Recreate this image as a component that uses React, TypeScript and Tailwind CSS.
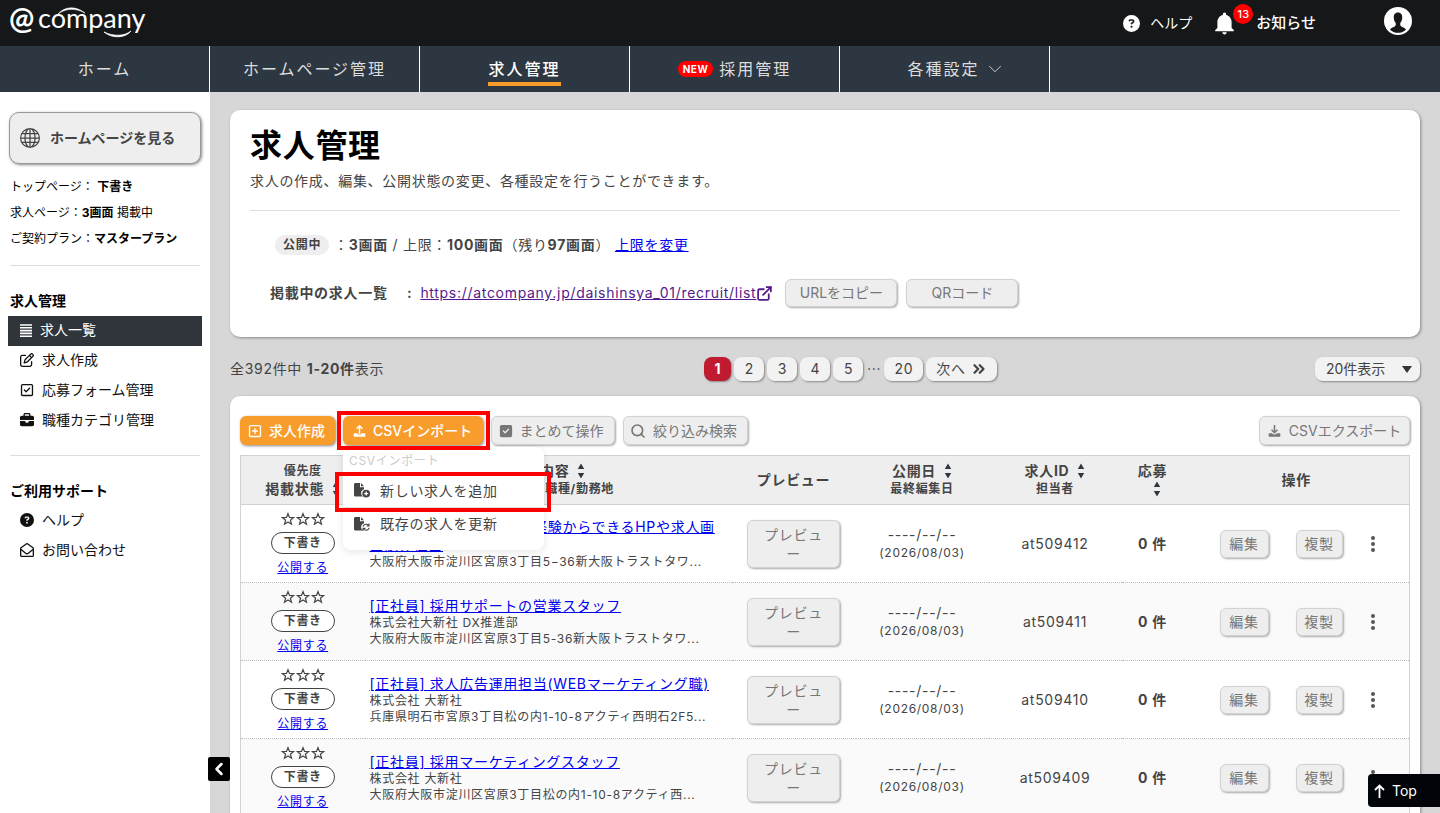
import type { ReactNode } from "react";
import clsx from "clsx";
import { ChevronDown, ChevronLeft, ChevronsRight, ExternalLink, Search } from "lucide-react";
import { BsGlobe } from "react-icons/bs";
import {
  FaBriefcase,
  FaCircleQuestion,
  FaRegEnvelopeOpen,
  FaRegPenToSquare,
  FaRegSquareCheck,
  FaRegSquarePlus,
  FaSquareCheck,
} from "react-icons/fa6";
import { IoMdNotifications } from "react-icons/io";

interface Job {
  id: string;
  title: string;
  company?: string;
  address: string;
}

const jobs: Job[] = [
  {
    id: "at509412",
    title: "[正社員] ウェブ制作 / 未経験からできるHPや求人画面制作担当",
    address: "大阪府大阪市淀川区宮原3丁目5−36新大阪トラストタワ...",
  },
  {
    id: "at509411",
    title: "[正社員] 採用サポートの営業スタッフ",
    company: "株式会社大新社 DX推進部",
    address: "大阪府大阪市淀川区宮原3丁目5-36新大阪トラストタワ...",
  },
  {
    id: "at509410",
    title: "[正社員] 求人広告運用担当(WEBマーケティング職)",
    company: "株式会社 大新社",
    address: "兵庫県明石市宮原3丁目松の内1-10-8アクティ西明石2F5...",
  },
  {
    id: "at509409",
    title: "[正社員] 採用マーケティングスタッフ",
    company: "株式会社 大新社",
    address: "大阪府大阪市淀川区宮原3丁目松の内1-10-8アクティ西...",
  },
];

function Logo() {
  return (
    <svg width="150" height="46" viewBox="0 0 150 46" fill="none" role="img" aria-label="@company">
      <text x="1" y="29" fontFamily="Lato, sans-serif" fontSize="30" fontWeight="700" letterSpacing="0" fill="#fff">
        @
      </text>
      <text x="30" y="28" fontFamily="Lato, sans-serif" fontSize="27" letterSpacing="0" fill="#fff">
        company
      </text>
      <path d="M50 14C57 6 68 6 77 13C68 8 58 8 50 14Z" fill="#fff" stroke="#fff" strokeWidth="0.6" />
      <path d="M96 32C104 39 118 38 123 31C117 36 106 37 96 32Z" fill="#fff" stroke="#fff" strokeWidth="0.8" />
    </svg>
  );
}

function UserIcon() {
  return (
    <svg width="28" height="28" viewBox="0 0 28 28">
      <circle cx="14" cy="14" r="14" fill="#fff" />
      <path
        d="M14 5.6C10.9 5.6 9.6 7.9 9.8 11C10 13.6 10.8 14.8 11.6 15.8C12 17 11.8 18.6 11 19.3C9.6 20.3 7.4 20.8 6 22.4C8 24.6 10.8 25.8 14 25.8S20 24.6 22 22.4C20.6 20.8 18.4 20.3 17 19.3C16.2 18.6 16 17 16.4 15.8C17.2 14.8 18 13.6 18.2 11C18.4 7.9 17.1 5.6 14 5.6Z"
        fill="#151719"
      />
    </svg>
  );
}

function ListIcon() {
  return (
    <svg width="12" height="13" viewBox="0 0 12 13" stroke="currentColor" strokeWidth="1.6">
      <path d="M0 1H12M0 3.8H12M0 6.6H12M0 9.4H12M0 12.2H12" />
    </svg>
  );
}

function TrayIcon({ down = false }: { down?: boolean }) {
  return (
    <svg width="13" height="14" viewBox="0 0 14 14" fill="none" stroke="currentColor" strokeWidth="1.6">
      <path d={down ? "M7 0.5V8.6M3.8 5.6L7 8.8L10.2 5.6" : "M7 10V1.6M3.8 4.6L7 1.4L10.2 4.6"} />
      <path
        d="M2 9.4H4.6C5 11.2 9 11.2 9.4 9.4H12C12.9 9.4 13.3 10 13.3 10.6V12C13.3 12.8 12.8 13.3 12 13.3H2C1.2 13.3 0.7 12.8 0.7 12V10.6C0.7 10 1.1 9.4 2 9.4Z"
        fill="currentColor"
        stroke="none"
      />
    </svg>
  );
}

function FileIcon({ refresh = false }: { refresh?: boolean }) {
  return (
    <svg width="17" height="15" viewBox="0 0 17 15" fill="none">
      <path
        d="M1.5 0H6V4.2H10V6.3C7.7 7 6.6 9 7.3 11.2C7.6 12.2 8.2 13 9 13.6H1.5C0.6 13.6 0 13 0 12.1V1.5C0 0.6 0.6 0 1.5 0ZM7 0L10 3.2H7Z"
        fill="#444"
      />
      {refresh ? (
        <path
          d="M8.9 9.6A3.3 3.3 0 0 1 14.6 8.4M15 6.6V9H12.6M15.2 10.8A3.3 3.3 0 0 1 9.5 12M9.1 13.8V11.4H11.5"
          stroke="#444"
          strokeWidth="1.1"
        />
      ) : (
        <>
          <circle cx="12.2" cy="10.6" r="3.9" fill="#444" />
          <path d="M12.2 8.6V12.6M10.2 10.6H14.2" stroke="#fff" strokeWidth="1.3" />
        </>
      )}
    </svg>
  );
}

function Sorter() {
  return (
    <svg className="shrink-0" width="8" height="16" viewBox="0 0 8 16" fill="#2d3741">
      <path d="M4 0.5L7.2 6H0.8ZM4 15.5L0.8 10H7.2Z" />
    </svg>
  );
}

function Stars() {
  return (
    <svg width="44" height="14" viewBox="0 0 44 14" fill="none" stroke="#444" strokeWidth="1.2">
      {[7, 22, 37].map((x) => (
        <path
          key={x}
          d={`M${x} 1.6L${x + 1.5} 5.4L${x + 5.6} 5.6L${x + 2.4} 8.2L${x + 3.5} 12.2L${x} 9.9L${x - 3.5} 12.2L${x - 2.4} 8.2L${x - 5.6} 5.6L${x - 1.5} 5.4Z`}
        />
      ))}
    </svg>
  );
}

function GrayButton({ className, children }: { className?: string; children: ReactNode }) {
  return (
    <button
      type="button"
      className={clsx(
        "flex items-center justify-center rounded-md border border-[#d2d2d2] bg-[#eee] text-[#777] shadow-[1px_1px_2px_#aaa]",
        className,
      )}
    >
      {children}
    </button>
  );
}

function NavItem({ children }: { children: ReactNode }) {
  return (
    <a href="#" className="flex w-[210px] items-center justify-center border-r border-white">
      {children}
    </a>
  );
}

function SideItem({ icon, label, active = false }: { icon: ReactNode; label: string; active?: boolean }) {
  return (
    <li>
      <a
        href="#"
        className={clsx(
          "mx-2 flex h-[30px] items-center gap-2 pb-[2px] pl-3",
          active ? "bg-[#2f353a] text-white" : "text-[#111]",
        )}
      >
        {icon}
        {label}
      </a>
    </li>
  );
}

function Sidebar() {
  return (
    <aside className="w-[210px] shrink-0 bg-white pt-5 tracking-normal text-black">
      <a
        href="#"
        className="mx-[9px] flex h-[52px] items-center gap-[10px] rounded-[10px] border border-[#999] bg-[#eee] pl-[10px] font-bold text-[#444] shadow-[1px_1px_3px_#888]"
      >
        <BsGlobe size={20} />
        ホームページを見る
      </a>
      <div className="mt-[10px] px-[10px] text-xs leading-[26px]">
        <p>
          トップページ： <b>下書き</b>
        </p>
        <p>
          求人ページ：<b>3画面</b> 掲載中
        </p>
        <p>
          ご契約プラン：<b>マスタープラン</b>
        </p>
      </div>
      <hr className="mx-[10px] mt-[13px] border-[#ddd]" />
      <h2 className="mt-5 px-[10px] leading-[30px] font-bold">求人管理</h2>
      <ul>
        <SideItem active icon={<ListIcon />} label="求人一覧" />
        <SideItem icon={<FaRegPenToSquare size={14} />} label="求人作成" />
        <SideItem icon={<FaRegSquareCheck size={14} />} label="応募フォーム管理" />
        <SideItem icon={<FaBriefcase size={14} />} label="職種カテゴリ管理" />
      </ul>
      <hr className="mx-[10px] mt-[19px] border-[#ddd]" />
      <h2 className="mt-5 px-[10px] leading-[30px] font-bold">ご利用サポート</h2>
      <ul>
        <SideItem icon={<FaCircleQuestion size={14} />} label="ヘルプ" />
        <SideItem icon={<FaRegEnvelopeOpen size={14} />} label="お問い合わせ" />
      </ul>
    </aside>
  );
}

function Summary() {
  return (
    <section className="rounded-[10px] bg-white px-5 pt-4 pb-[30px] shadow-[1px_1px_3px_#888]">
      <h1 className="text-[32px] leading-10 font-bold text-black">求人管理</h1>
      <p className="mt-1 leading-[22px]">求人の作成、編集、公開状態の変更、各種設定を行うことができます。</p>
      <hr className="mt-[18px] border-[#ddd]" />
      <div className="mt-[22px] flex h-6 items-center pl-[25px]">
        <span className="rounded-full bg-[#eee] px-2 text-xs leading-5 font-bold">公開中</span>
        <p className="pl-[5px]">
          ：<b>3画面</b> / 上限：<b>100画面</b>（残り<b>97画面</b>）
        </p>
        <a href="#" className="pl-[5px] text-[#00e] underline">
          上限を変更
        </a>
      </div>
      <div className="mt-[22px] flex h-7 items-center pl-5">
        <b className="w-[137px]">掲載中の求人一覧</b>
        <b>:</b>
        <a href="#" className="ml-2 flex items-center text-[#551a8b]">
          <span className="underline">https://atcompany.jp/daishinsya_01/recruit/list</span>
          <ExternalLink size={17} strokeWidth={2.5} />
        </a>
        <GrayButton className="ml-3 h-7 w-[112px] tracking-normal">URLをコピー</GrayButton>
        <GrayButton className="ml-[9px] h-7 w-[112px] tracking-normal">QRコード</GrayButton>
      </div>
    </section>
  );
}

function Pager() {
  const button = "h-6 rounded-lg px-[10px] shadow-[1px_1px_2px_#888]";
  return (
    <div className="mt-5 flex items-center justify-between">
      <p>
        全392件中 <b>1-20件</b>表示
      </p>
      <nav className="flex items-center gap-[3px] pl-[2px]" aria-label="ページ">
        <button type="button" className={clsx(button, "w-[27px] bg-[#bf1a2f] font-bold text-white")}>
          1
        </button>
        {["2", "3", "4", "5"].map((n) => (
          <button key={n} type="button" className={clsx(button, "w-[30px] bg-[#f2f2f2]")}>
            {n}
          </button>
        ))}
        <span className="w-[15px] text-center">⋯</span>
        <button type="button" className={clsx(button, "bg-[#f2f2f2]")}>
          20
        </button>
        <button type="button" className={clsx(button, "flex items-center gap-1 bg-[#f2f2f2] pr-[9px]")}>
          次へ <ChevronsRight size={18} strokeWidth={3} />
        </button>
      </nav>
      <div className="relative">
        <select
          aria-label="表示件数"
          className="h-6 w-[105px] appearance-none rounded-lg bg-[#f2f2f2] pl-[11px] tracking-normal shadow-[1px_1px_2px_#888]"
        >
          <option>20件表示</option>
        </select>
        <svg className="pointer-events-none absolute top-[9px] right-2" width="10" height="7" viewBox="0 0 10 7">
          <path d="M0 0H10L5 7Z" fill="#333" />
        </svg>
      </div>
    </div>
  );
}

function ImportMenu() {
  return (
    <div className="relative">
      <button
        type="button"
        className="flex h-[29px] w-[140px] items-center gap-[7px] rounded-md bg-[#f89c2c] pl-[10px] font-medium text-white shadow-[1px_1px_3px_#888]"
      >
        <TrayIcon />
        CSVインポート
      </button>
      <div className="absolute top-[31px] left-0 z-10 w-[201px] rounded-lg bg-white pb-[10px] tracking-wider shadow-[0_2px_8px_#0000001a]">
        <p className="pl-[6px] text-xs leading-[27px] text-[#ccc]">CSVインポート</p>
        <button type="button" className="flex h-[34px] w-full items-center gap-[9px] border-b border-[#ddd] pl-[11px]">
          <FileIcon />
          新しい求人を追加
        </button>
        <button type="button" className="flex h-8 w-full items-center gap-[9px] pl-[11px]">
          <FileIcon refresh />
          既存の求人を更新
        </button>
      </div>
      <div className="pointer-events-none absolute -top-[5px] -left-[6px] z-20 h-[39px] w-[153px] border-4 border-[#f00]" />
      <div className="pointer-events-none absolute top-14 -left-2 z-20 h-10 w-[216px] border-4 border-[#f00]" />
    </div>
  );
}

function JobTable() {
  return (
    <table className="mt-[10px] w-full table-fixed border border-[#d2d2d2]">
      <colgroup>
        <col className="w-[124px]" />
        <col />
        <col className="w-[124px]" />
        <col className="w-[133px]" />
        <col className="w-[133px]" />
        <col className="w-[62px]" />
        <col className="w-[226px]" />
      </colgroup>
      <thead>
        <tr className="h-[49px] border-b border-[#d2d2d2] bg-[#eee] leading-[18px]">
          <th>
            <div className="text-xs leading-[18px]">優先度</div>
            <div className="flex items-center justify-center gap-2">
              掲載状態 <Sorter />
            </div>
          </th>
          <th>
            <div className="flex items-center justify-center gap-2">
              求人内容 <Sorter />
            </div>
            <div className="text-xs leading-[18px]">会社名称 / 職種/勤務地</div>
          </th>
          <th>プレビュー</th>
          <th>
            <div className="flex items-center justify-center gap-2">
              公開日 <Sorter />
            </div>
            <div className="text-xs leading-[18px]">最終編集日</div>
          </th>
          <th>
            <div className="flex items-center justify-center gap-2">
              求人ID <Sorter />
            </div>
            <div className="text-xs leading-[18px]">担当者</div>
          </th>
          <th>
            <div>応募</div>
            <div className="flex h-[18px] items-center justify-center pl-2">
              <Sorter />
            </div>
          </th>
          <th>操作</th>
        </tr>
      </thead>
      <tbody>
        {jobs.map((job) => (
          <tr key={job.id} className="h-[78px] border-b border-dotted border-[#bbb] text-center even:bg-[#fafafa]">
            <td>
              <div className="flex flex-col items-center pt-[3px]">
                <Stars />
                <span className="mt-[6px] w-16 rounded-full border border-[#444] bg-white text-xs leading-5 font-bold">
                  下書き
                </span>
                <a href="#" className="mt-1 text-xs leading-5 text-[#00e] underline">
                  公開する
                </a>
              </div>
            </td>
            <td className="pr-[6px] pl-[5px] text-left text-xs leading-4">
              <a href="#" className="block pr-2 text-sm leading-[18px] break-all text-[#00e] underline">
                {job.title}
              </a>
              {job.company && <p>{job.company}</p>}
              <p className="truncate">{job.address}</p>
            </td>
            <td>
              <GrayButton className="mx-auto h-12 w-[93px] px-4 leading-[19px] break-all">プレビュー</GrayButton>
            </td>
            <td className="leading-[18px]">
              ----/--/--
              <div className="text-xs leading-[18px]">(2026/08/03)</div>
            </td>
            <td>{job.id}</td>
            <td className="font-bold">0 件</td>
            <td>
              <div className="flex items-center gap-[27px] pl-9">
                <GrayButton className="h-7 w-[49px]">編集</GrayButton>
                <GrayButton className="h-7 w-[47px]">複製</GrayButton>
                <button type="button" aria-label="その他">
                  <svg width="6" height="16" viewBox="0 0 6 16" fill="#555">
                    <circle cx="3" cy="2" r="2" />
                    <circle cx="3" cy="8" r="2" />
                    <circle cx="3" cy="14" r="2" />
                  </svg>
                </button>
              </div>
            </td>
          </tr>
        ))}
      </tbody>
    </table>
  );
}

export default function App() {
  return (
    <div className="flex h-screen flex-col overflow-hidden bg-[#d7d7d7] font-['Inter','Noto_Sans_CJK_JP',sans-serif] text-sm tracking-wider text-[#444]">
      <header className="flex h-[46px] shrink-0 items-center bg-[#151719] px-2 text-white">
        <a href="#">
          <Logo />
        </a>
        <a href="#" className="ml-auto flex items-center gap-[10px] tracking-normal">
          <FaCircleQuestion size={17} />
          ヘルプ
        </a>
        <a href="#" className="relative ml-[19px] flex items-center gap-[18px] text-[15px] font-medium tracking-normal">
          <IoMdNotifications size={27} />
          お知らせ
          <span className="absolute -top-[6px] left-[22px] size-5 rounded-full bg-[#f00] text-center text-[11px] leading-5">
            13
          </span>
        </a>
        <button type="button" aria-label="アカウント" className="mr-5 mb-1 ml-[68px]">
          <UserIcon />
        </button>
      </header>

      <nav className="flex h-[46px] shrink-0 bg-[#2d3741] text-base tracking-[2px] text-[#ddd]">
        <NavItem>ホーム</NavItem>
        <NavItem>ホームページ管理</NavItem>
        <NavItem>
          <span className="border-b-4 border-[#f89c2c] pt-1 leading-[26px] font-medium text-white">求人管理</span>
        </NavItem>
        <NavItem>
          <span className="mr-[6px] rounded-full bg-[#f00] px-[5px] text-[10px] leading-4 font-bold tracking-wider text-white">
            NEW
          </span>
          採用管理
        </NavItem>
        <NavItem>
          <span className="pl-6">各種設定</span>
          <ChevronDown className="ml-1" size={22} strokeWidth={1} />
        </NavItem>
      </nav>

      <div className="flex min-h-0 flex-1">
        <Sidebar />
        <main className="min-w-0 flex-1 overflow-y-auto px-5 pt-[18px] [scrollbar-width:none]">
          <Summary />
          <Pager />
          <section className="mt-[15px] rounded-[10px] bg-white px-[10px] pt-5 pb-5 shadow-[1px_1px_3px_#888]">
            <div className="flex gap-2 tracking-normal">
              <button
                type="button"
                className="flex h-[29px] w-[95px] items-center gap-[7px] rounded-md bg-[#f89c2c] pl-2 font-medium text-white shadow-[1px_1px_3px_#888]"
              >
                <FaRegSquarePlus size={14} />
                求人作成
              </button>
              <ImportMenu />
              <GrayButton className="h-[29px] w-[124px] gap-[7px] pr-1">
                <FaSquareCheck size={14} />
                まとめて操作
              </GrayButton>
              <GrayButton className="h-[29px] w-[125px] gap-[7px] pr-1">
                <Search size={16} strokeWidth={2.5} />
                絞り込み検索
              </GrayButton>
              <GrayButton className="ml-auto h-[29px] w-[151px] gap-2">
                <TrayIcon down />
                CSVエクスポート
              </GrayButton>
            </div>
            <JobTable />
          </section>
        </main>
      </div>

      <button
        type="button"
        aria-label="メニューを閉じる"
        className="fixed bottom-8 left-52 flex h-6 w-[22px] items-center justify-center rounded-xs bg-black text-white"
      >
        <ChevronLeft size={20} strokeWidth={3} />
      </button>
      <a
        href="#"
        className="fixed right-0 bottom-[6px] flex h-[33px] w-[72px] items-center gap-[7px] rounded-l bg-[#010408] pl-[6px] tracking-normal text-white"
      >
        <svg width="11" height="14" viewBox="0 0 11 14" fill="none" stroke="currentColor" strokeWidth="1.8">
          <path d="M5.5 14V1.5M1 6L5.5 1.5L10 6" />
        </svg>
        Top
      </a>
    </div>
  );
}
